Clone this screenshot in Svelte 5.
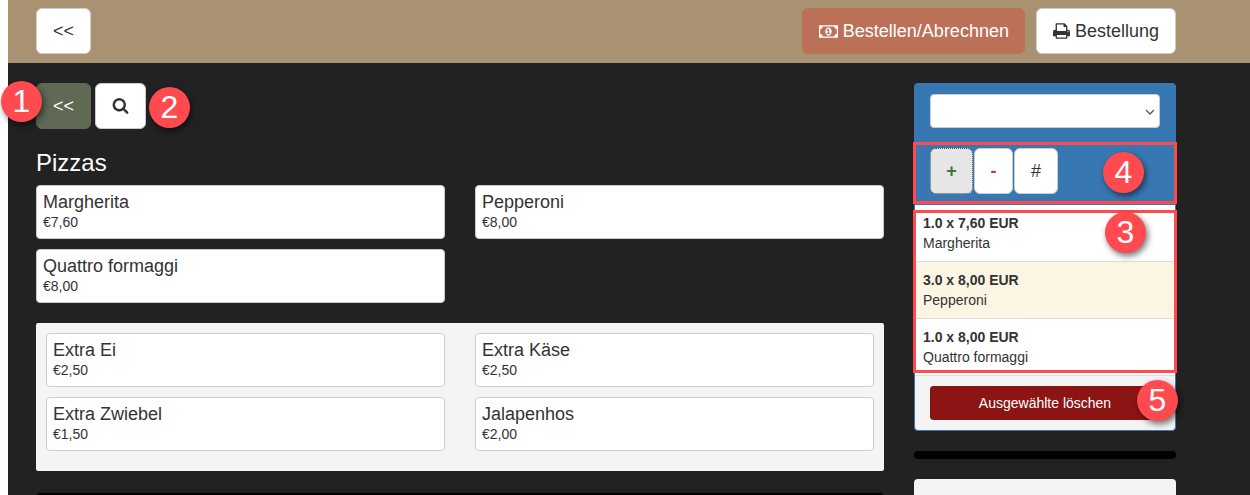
<script lang="ts">
  const pizzas = [
    { name: "Margherita", price: "€7,60" },
    { name: "Pepperoni", price: "€8,00" },
    { name: "Quattro formaggi", price: "€8,00" },
  ];
  const extras = [
    { name: "Extra Ei", price: "€2,50" },
    { name: "Extra Käse", price: "€2,50" },
    { name: "Extra Zwiebel", price: "€1,50" },
    { name: "Jalapenhos", price: "€2,00" },
  ];
  const lines = [
    { qty: "1.0 x 7,60 EUR", name: "Margherita", selected: false },
    { qty: "3.0 x 8,00 EUR", name: "Pepperoni", selected: true },
    { qty: "1.0 x 8,00 EUR", name: "Quattro formaggi", selected: false },
  ];
  const markers = [1, 2, 3, 4, 5];
</script>

<div class="page">
  <header class="topbar">
    <button class="btn">&lt;&lt;</button>
    <div class="actions">
      <button class="btn order">
        <svg class="icon money" viewBox="-64 256 1920 1280" aria-hidden="true">
          <path d="M704 1152h384v-96h-128v-448h-114l-148 137 77 80q42-37 55-57h2v288h-128v96zm512-256q0 70-21 142t-59.5 134-101.5 101-138 39-138-39-101.5-101-59.5-134-21-142 21-142 59.5-134 101.5-101 138-39 138 39 101.5 101 59.5 134 21 142zm512 256v-512q-106 0-181-75t-75-181h-1152q0 106-75 181t-181 75v512q106 0 181 75t75 181h1152q0-106 75-181t181-75zm128-832v1152q0 26-19 45t-45 19h-1792q-26 0-45-19t-19-45v-1152q0-26 19-45t45-19h1792q26 0 45 19t19 45z" />
        </svg>
        Bestellen/Abrechnen
      </button>
      <button class="btn">
        <svg class="icon print" viewBox="64 128 1664 1536" aria-hidden="true">
          <path d="M448 1536h896v-256h-896v256zm0-640h896v-384h-160q-40 0-68-28t-28-68v-160h-640v640zm1152 64q0-26-19-45t-45-19-45 19-19 45 19 45 45 19 45-19 19-45zm128 0v416q0 13-9.5 22.5t-22.5 9.5h-224v160q0 40-28 68t-68 28h-960q-40 0-68-28t-28-68v-160h-224q-13 0-22.5-9.5t-9.5-22.5v-416q0-79 56.5-135.5t135.5-56.5h64v-544q0-40 28-68t68-28h672q40 0 88 20t76 48l152 152q28 28 48 76t20 88v256h64q79 0 135.5 56.5t56.5 135.5z" />
        </svg>
        Bestellung
      </button>
    </div>
  </header>

  <main class="content">
    <section class="menu">
      <div class="nav">
        <button class="btn back">&lt;&lt;</button>
        <button class="btn">
          <svg class="icon search" viewBox="0 128 1792 1664" aria-hidden="true">
            <path d="M1216 832q0-185-131.5-316.5t-316.5-131.5-316.5 131.5-131.5 316.5 131.5 316.5 316.5 131.5 316.5-131.5 131.5-316.5zm512 832q0 52-38 90t-90 38q-54 0-90-38l-343-342q-179 124-399 124-143 0-273.5-55.5t-225-150-150-225-55.5-273.5 55.5-273.5 150-225 225-150 273.5-55.5 273.5 55.5 225 150 150 225 55.5 273.5q0 220-124 399l343 343q37 37 37 90z" />
          </svg>
        </button>
      </div>

      <h3>Pizzas</h3>
      <div class="cards">
        {#each pizzas as item}
          <div class="card">
            <div class="name">{item.name}</div>
            <div class="price">{item.price}</div>
          </div>
        {/each}
      </div>

      <div class="extras">
        <div class="cards">
          {#each extras as item}
            <div class="card">
              <div class="name">{item.name}</div>
              <div class="price">{item.price}</div>
            </div>
          {/each}
        </div>
      </div>

      <div class="bar"></div>
    </section>

    <aside class="side">
      <div class="panel">
        <div class="panel-head">
          <div class="select-wrap">
            <select class="table-select" aria-label="Tisch">
              <option></option>
            </select>
            <svg class="chevron" viewBox="0 0 10 6" aria-hidden="true">
              <path d="M1 1l4 4 4-4" />
            </svg>
          </div>
          <div class="modes">
            <button class="mode plus">+</button>
            <button class="mode minus">-</button>
            <button class="mode hash">#</button>
          </div>
        </div>
        <ul class="lines">
          {#each lines as line}
            <li class:selected={line.selected}>
              <b>{line.qty}</b>
              <span>{line.name}</span>
            </li>
          {/each}
        </ul>
        <div class="panel-foot">
          <button class="delete">Ausgewählte löschen</button>
        </div>
      </div>
      <div class="side-bar"></div>
      <div class="side-box"></div>
    </aside>
  </main>

  <div class="frame frame-modes"></div>
  <div class="frame frame-lines"></div>
  {#each markers as n}
    <div class="marker m{n}">{n}</div>
  {/each}
</div>

<style>
  :global(body) {
    margin: 0;
    background: #fff;
  }

  .page {
    margin-left: 8px;
    height: 495px;
    overflow: hidden;
    background: #222;
    font-family: "Liberation Sans", Arial, sans-serif;
    font-size: 14px;
    color: #333;
  }

  .topbar {
    display: flex;
    justify-content: space-between;
    height: 63px;
    box-sizing: border-box;
    padding: 8px 74px 0 28px;
    background: #a89272;
  }

  .actions {
    display: flex;
    gap: 11px;
  }

  .btn {
    display: inline-flex;
    align-items: center;
    gap: 5px;
    height: 46px;
    box-sizing: border-box;
    padding: 0 16px;
    border: 1px solid #ccc;
    border-radius: 6px;
    background: #fff;
    color: #333;
    font: 18px "Liberation Sans", Arial, sans-serif;
  }

  .order {
    padding-right: 15px;
    background: #bc7058;
    border-color: #bc7058;
    color: #fff;
  }

  .back {
    background: #5f6953;
    border-color: #5f6953;
    color: #fff;
  }

  .icon {
    fill: currentColor;
    display: block;
  }

  .money {
    width: 19px;
    height: 13px;
  }

  .print {
    width: 17px;
    height: 16px;
  }

  .search {
    width: 17px;
    height: 16px;
  }

  .content {
    display: grid;
    grid-template-columns: 848px 262px;
    gap: 30px;
    padding: 20px 0 0 28px;
  }

  .nav {
    display: flex;
    gap: 4px;
  }

  h3 {
    margin: 21px 0 9px;
    font-size: 24px;
    font-weight: 400;
    line-height: 26px;
    color: #fff;
  }

  .cards {
    display: grid;
    grid-template-columns: 1fr 1fr;
    column-gap: 30px;
    row-gap: 10px;
  }

  .card {
    box-sizing: border-box;
    height: 54px;
    padding: 6px;
    background: #fff;
    border: 1px solid #ccc;
    border-radius: 4px;
  }

  .name {
    font-size: 18px;
    line-height: 20px;
  }

  .price {
    font-size: 14px;
    line-height: 20px;
  }

  .extras {
    margin-top: 20px;
    padding: 10px 10px 20px;
    background: #f4f4f4;
    border-radius: 2px;
  }

  .bar {
    height: 20px;
    margin-top: 22px;
    background: #000;
    border-radius: 4px;
  }

  .panel {
    box-sizing: border-box;
    border: 1px solid #3878b2;
    border-radius: 4px;
    background: #f4f4f4;
  }

  .panel-head {
    height: 121px;
    box-sizing: border-box;
    padding: 10px 15px;
    background: #3878b2;
  }

  .select-wrap {
    position: relative;
  }

  .table-select {
    display: block;
    width: 100%;
    height: 34px;
    padding: 6px 12px;
    appearance: none;
    background: #fff;
    border: 1px solid #ccc;
    border-radius: 4px;
    font-size: 14px;
  }

  .chevron {
    position: absolute;
    right: 5px;
    top: 15px;
    width: 10px;
    height: 6px;
    fill: none;
    stroke: #555;
    stroke-width: 1.3;
  }

  .modes {
    display: flex;
    gap: 1px;
    margin-top: 20px;
  }

  .mode {
    height: 46px;
    box-sizing: border-box;
    padding: 0;
    border: 1px solid #ccc;
    border-radius: 6px;
    background: #fff;
    font: bold 18px "Liberation Sans", Arial, sans-serif;
  }

  .plus {
    width: 43px;
    background: #e6e6e6;
    border: 1px dotted #444;
    color: #3c763d;
  }

  .minus {
    width: 39px;
    color: #a94442;
  }

  .hash {
    width: 44px;
    font-weight: 400;
    color: #333;
  }

  .lines {
    margin: 0;
    padding: 0;
    list-style: none;
  }

  .lines li {
    height: 57px;
    box-sizing: border-box;
    padding: 8px 8px;
    background: #fff;
    border-bottom: 1px solid #ddd;
    font-size: 14px;
    line-height: 20px;
  }

  .lines li.selected {
    background: #fcf5e3;
  }

  .lines b,
  .lines span {
    display: block;
  }

  .panel-foot {
    padding: 10px 15px;
  }

  .delete {
    display: block;
    width: 100%;
    height: 34px;
    border: 1px solid #8b1515;
    border-radius: 3px;
    background: #8b1515;
    color: #fff;
    font: 14px "Liberation Sans", Arial, sans-serif;
  }

  .side-bar {
    height: 8px;
    margin-top: 20px;
    background: #000;
    border-radius: 4px;
  }

  .side-box {
    height: 60px;
    margin-top: 20px;
    background: #f4f4f4;
    border-radius: 4px;
  }

  /* annotations drawn over the screenshot */
  .frame {
    position: absolute;
    left: 913px;
    width: 264px;
    box-sizing: border-box;
    border: 3px solid #ff4a4f;
  }

  .frame-modes {
    top: 142px;
    height: 62px;
  }

  .frame-lines {
    top: 210px;
    height: 163px;
  }

  .marker {
    position: absolute;
    width: 41px;
    height: 41px;
    border-radius: 50%;
    background: #ff4a4f;
    color: #fff;
    font-size: 32px;
    line-height: 41px;
    text-align: center;
    box-shadow: 2px 3px 6px rgba(0, 0, 0, 0.55);
  }

  .m1 {
    left: 1px;
    top: 81px;
  }

  .m2 {
    left: 149px;
    top: 87px;
  }

  .m3 {
    left: 1105px;
    top: 212px;
  }

  .m4 {
    left: 1103px;
    top: 152px;
  }

  .m5 {
    left: 1137px;
    top: 380px;
  }
</style>
